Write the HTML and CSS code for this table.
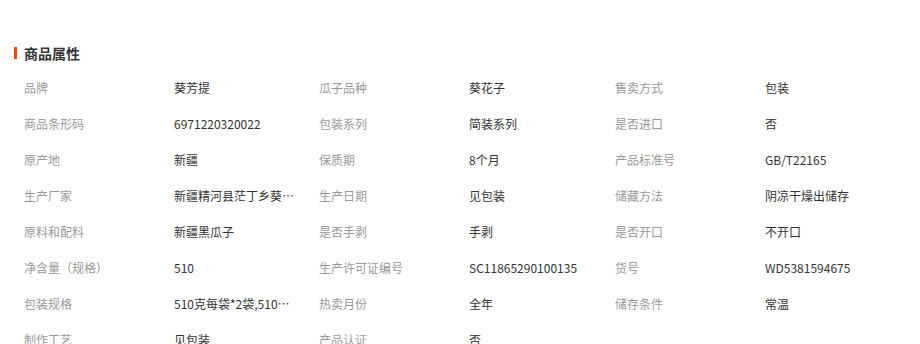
FILE: index.html
```html
<!DOCTYPE html>
<html lang="zh-CN">
<head>
<meta charset="utf-8">
<link rel="stylesheet" href="styles.css">
</head>
<body>
<div class="section">
  <h3 class="title">商品属性</h3>
  <div class="attrs">
    <div class="k">品牌</div><div class="v">葵芳提</div>
    <div class="k">瓜子品种</div><div class="v">葵花子</div>
    <div class="k">售卖方式</div><div class="v">包装</div>

    <div class="k">商品条形码</div><div class="v">6971220320022</div>
    <div class="k">包装系列</div><div class="v">简装系列</div>
    <div class="k">是否进口</div><div class="v">否</div>

    <div class="k">原产地</div><div class="v">新疆</div>
    <div class="k">保质期</div><div class="v">8个月</div>
    <div class="k">产品标准号</div><div class="v">GB/T22165</div>

    <div class="k">生产厂家</div><div class="v">新疆精河县茫丁乡葵芳提食品有限公司</div>
    <div class="k">生产日期</div><div class="v">见包装</div>
    <div class="k">储藏方法</div><div class="v">阴凉干燥出储存</div>

    <div class="k">原料和配料</div><div class="v">新疆黑瓜子</div>
    <div class="k">是否手剥</div><div class="v">手剥</div>
    <div class="k">是否开口</div><div class="v">不开口</div>

    <div class="k">净含量（规格）</div><div class="v">510</div>
    <div class="k">生产许可证编号</div><div class="v">SC11865290100135</div>
    <div class="k">货号</div><div class="v">WD5381594675</div>

    <div class="k">包装规格</div><div class="v">510克每袋*2袋,510克每袋*4袋</div>
    <div class="k">热卖月份</div><div class="v">全年</div>
    <div class="k">储存条件</div><div class="v">常温</div>

    <div class="k">制作工艺</div><div class="v">见包装</div>
    <div class="k">产品认证</div><div class="v">否</div>
  </div>
</div>
</body>
</html>
```
FILE: styles.css
```css
html, body {
  margin: 0;
  padding: 0;
  background: #fff;
}
body {
  font-family: "Noto Sans CJK SC", "Noto Sans", sans-serif;
  font-size: 12px;
  color: #333;
}
.section {
  padding: 47px 0 0 14px;
}
.title {
  margin: 0 0 11px 0;
  padding-left: 7px;
  border-left: 3px solid #ff4400;
  font-size: 14px;
  font-weight: bold;
  line-height: 12px;
  height: 12px;
  color: #333;
  display: flex;
  align-items: center;
}
.attrs {
  margin-left: 10px;
  display: grid;
  grid-template-columns: 150px 145px 150px 146px 150px 1fr;
  grid-auto-rows: 36px;
  line-height: 36px;
}
.k {
  color: #999;
  white-space: nowrap;
}
.v {
  color: #333;
  max-width: 122px;
  white-space: nowrap;
  overflow: hidden;
  text-overflow: ellipsis;
}
```
